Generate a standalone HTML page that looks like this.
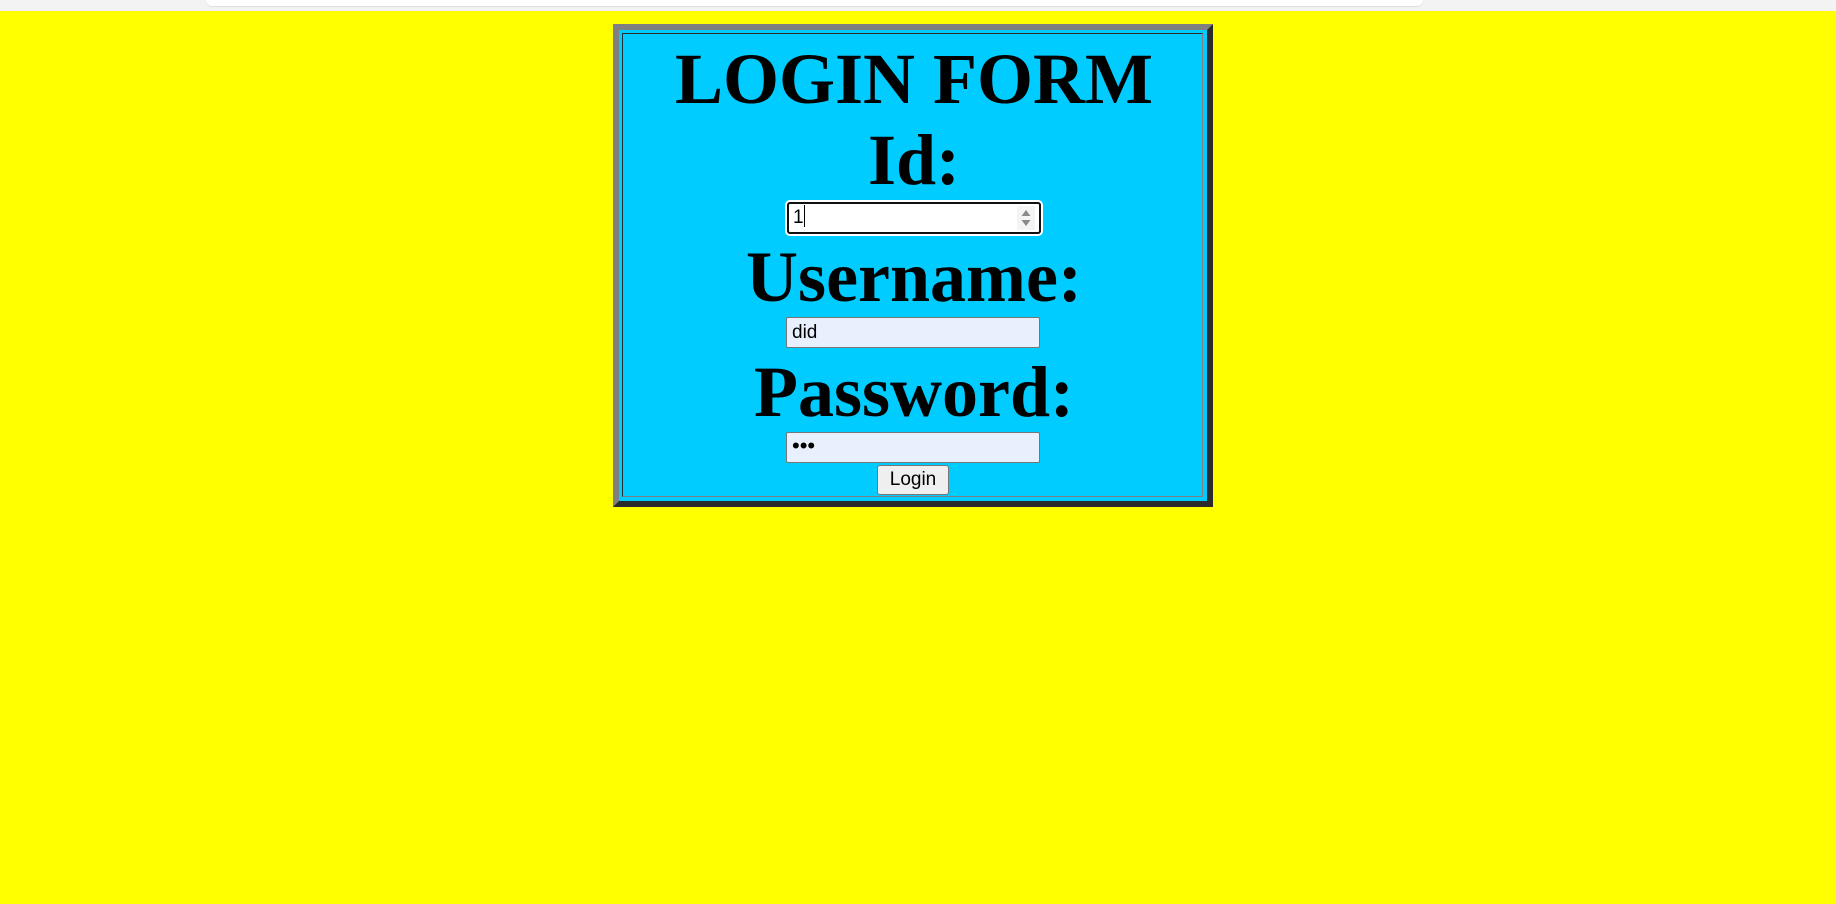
<!DOCTYPE html>
<html><head><style>
html,body{margin:0;padding:0;}
body{width:1836px;height:904px;background:#ffff00;position:relative;overflow:hidden;font-family:"Liberation Sans",Arial,sans-serif;}
.topbar{position:absolute;left:0;top:0;width:1836px;height:11px;background:#f3f3f3;}
.topbar .pill{position:absolute;left:206px;top:0;width:1217px;height:6px;background:#fff;border-radius:0 0 8px 8px;box-shadow:0 1px 1px #ddd;}
.box{position:absolute;left:613px;top:24px;width:588px;height:471px;border:6px solid;border-color:#808080 #2b2b2b #2b2b2b #808080;background:#00ccff;}
.cell{position:absolute;left:3px;top:3px;width:579px;height:462px;border:1px solid;border-color:#2b2b2b #808080 #808080 #2b2b2b;}
.lbl{position:absolute;left:-4px;width:1836px;text-align:center;font-family:"Liberation Serif","Times New Roman",serif;font-weight:bold;font-size:72px;line-height:80px;color:#000;white-space:nowrap;}
.inp{position:absolute;box-sizing:border-box;background:#e8f0fe;border:1px solid #767676;border-radius:2px;font-size:19px;line-height:29px;padding-left:5px;color:#000;}
.idin{position:absolute;left:785px;top:200px;width:258px;height:36px;box-sizing:border-box;border:2px solid #fff;border-radius:5px;}
.idin .in{position:absolute;left:0;top:0;right:0;bottom:0;border:2px solid #101010;border-radius:3px;background:#fff;font-size:19px;line-height:28px;padding-left:4px;}
.caret{display:inline-block;width:1px;height:22px;background:#000;vertical-align:-4px;}
.spin{position:absolute;right:4px;top:2px;width:18px;height:24px;background:#f4f4f4;}
.btn{position:absolute;left:877px;top:465px;width:72px;height:30px;box-sizing:border-box;background:#efefef;border:1px solid #767676;border-radius:3px;font-size:19px;line-height:28px;text-align:center;color:#000;}
</style></head><body>
<div class="topbar"><div class="pill"></div></div>
<div class="box"><div class="cell"></div></div>
<div class="lbl" style="top:39px">LOGIN FORM</div>
<div class="lbl" style="top:120px">Id:</div>
<div class="idin"><div class="in">1<span class="caret"></span>
<svg class="spin" viewBox="0 0 18 24"><path d="M4.5 10 L9 4 L13.5 10 Z M4.5 14 L13.5 14 L9 20 Z" fill="#8a8a8a"/></svg></div></div>
<div class="lbl" style="top:237px">Username:</div>
<div class="inp" style="left:786px;top:317px;width:254px;height:31px;">did</div>
<div class="lbl" style="top:352px">Password:</div>
<div class="inp" style="left:786px;top:432px;width:254px;height:31px;font-size:22px;line-height:25px;">•••</div>
<div class="btn">Login</div>
</body></html>
